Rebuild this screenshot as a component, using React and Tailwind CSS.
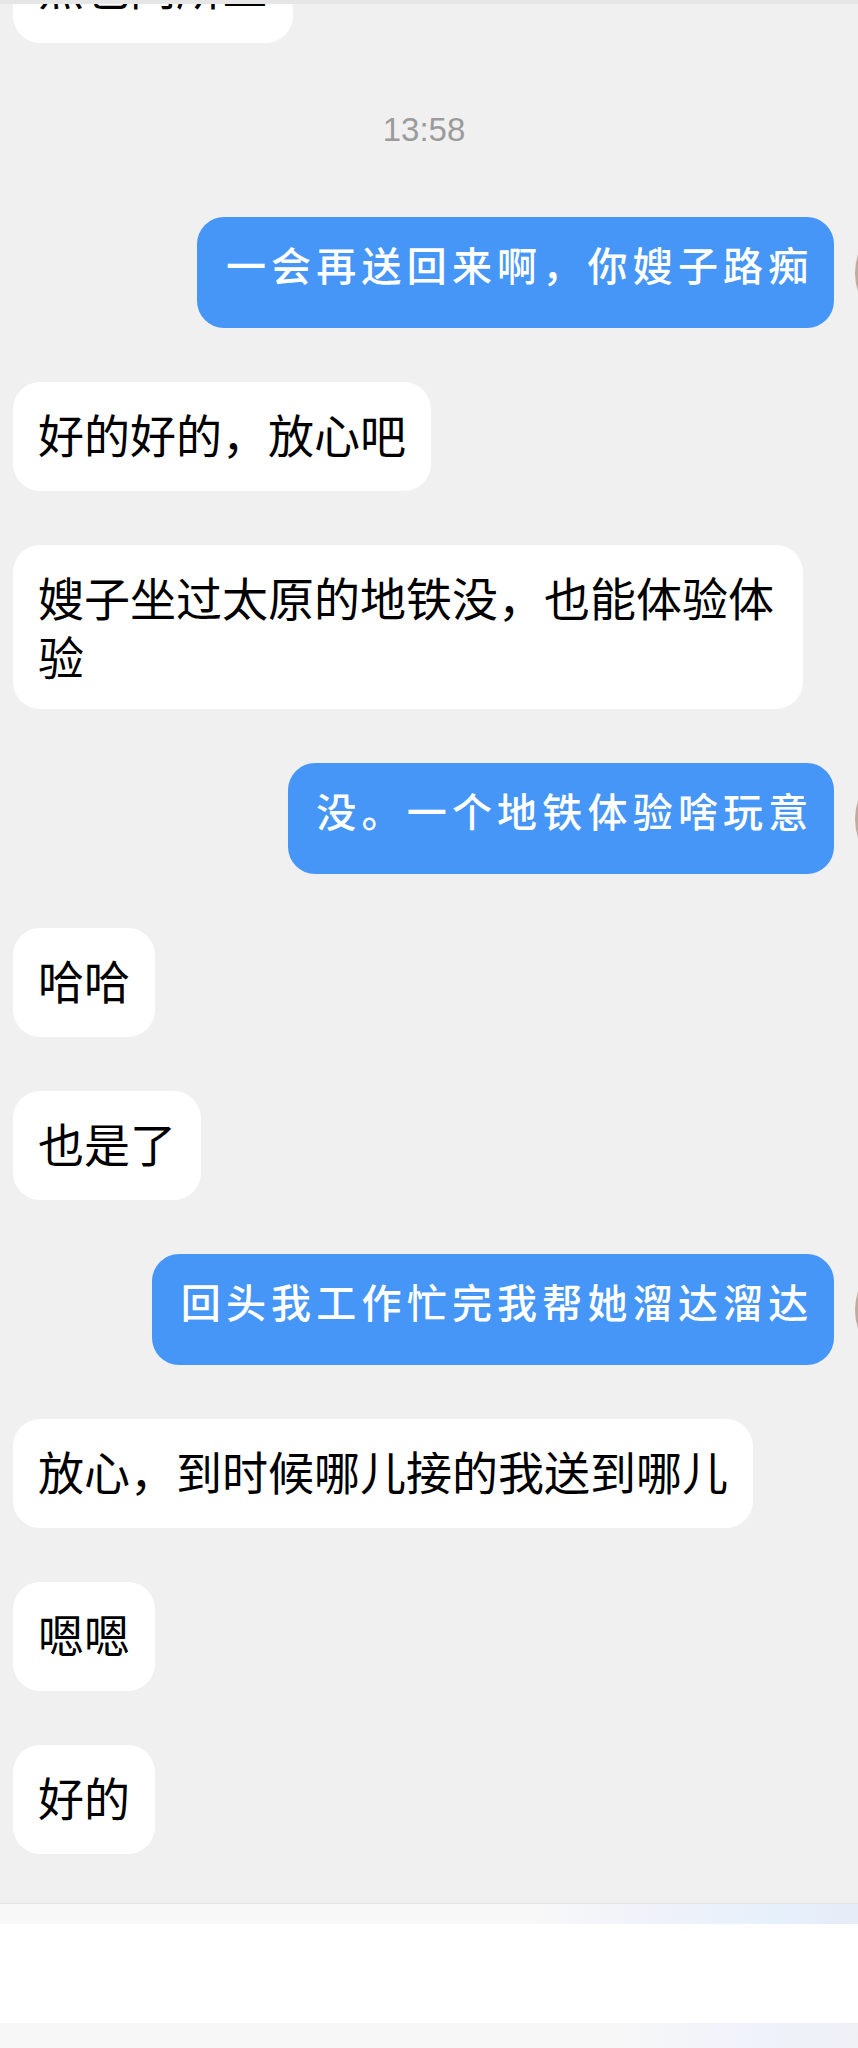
const Left = ({ children, twoLines }) => (
  <div
    className={
      twoLines
        ? "max-w-[790px] rounded-[27px] bg-white px-[25px] pt-[22px] pb-[24px] text-[46px] leading-[59px] text-black"
        : "rounded-[27px] bg-white px-[25px] pt-[22px] pb-[28px] text-[46px] leading-[59px] text-black"
    }
  >
    {children}
  </div>
);

const Right = ({ children }) => (
  <div className="flex w-full items-center justify-end">
    <div className="h-[111px] rounded-[27px] bg-[#4696f7] pt-[25px] pr-[20.5px] pl-[28.5px] text-[40px] leading-[45px] font-medium tracking-[5.2px] whitespace-nowrap text-white">
      {children}
    </div>
    <div className="-my-[10px] ml-[21px] -mr-[117px] h-[120px] w-[120px] shrink-0 rounded-full bg-[#c2ab9c]" />
  </div>
);

export default function App() {
  return (
    <div className="flex h-[2048px] w-[858px] flex-col overflow-hidden bg-[#f1f0f1] font-['Noto_Sans_CJK_SC',sans-serif]">
      <div className="relative z-10 h-[4px] shrink-0 bg-[#e6e6e6]" />
      <main className="flex min-h-0 flex-1 flex-col items-start gap-[54px] pl-[13px]">
        <div className="-mt-[71px] h-[110px] w-[280px] shrink-0 rounded-[27px] bg-white px-[25px] pt-[23px] text-[46px] leading-[59px] whitespace-nowrap text-black">
          点也同所三
        </div>
        <div className="-my-[54px] flex h-[174px] w-[845px] shrink-0 items-center justify-center pr-[23px] font-['Liberation_Sans',sans-serif] text-[33px] text-[#9b9b9b]">
          13:58
        </div>
        <div className="w-[845px]">
          <Right>一会再送回来啊，你嫂子路痴</Right>
        </div>
        <Left>好的好的，放心吧</Left>
        <Left twoLines>嫂子坐过太原的地铁没，也能体验体验</Left>
        <div className="w-[845px]">
          <Right>没。一个地铁体验啥玩意</Right>
        </div>
        <Left>哈哈</Left>
        <Left>也是了</Left>
        <div className="w-[845px]">
          <Right>回头我工作忙完我帮她溜达溜达</Right>
        </div>
        <Left>放心，到时候哪儿接的我送到哪儿</Left>
        <Left>嗯嗯</Left>
        <Left>好的</Left>
      </main>
      <footer className="shrink-0">
        <div className="h-[21px] border-t border-[#e4e4e4] bg-[linear-gradient(90deg,#f8f8f8_0%,#f8f8f8_62%,#f1f2fa_75%,#e6f0fb_90%,#e6ecf8_100%)]" />
        <div className="h-[99px] bg-white" />
        <div className="h-[25px] bg-[linear-gradient(90deg,#f7f7f7_0%,#f7f7f7_72%,#f0f2fb_88%,#eef0f6_100%)]" />
      </footer>
    </div>
  );
}
